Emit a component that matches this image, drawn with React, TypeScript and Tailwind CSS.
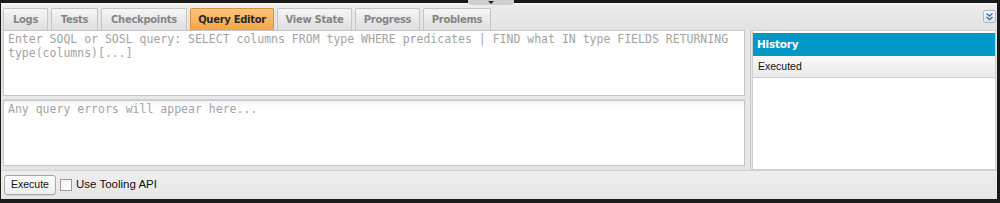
import { useState } from "react";

const tabs = [
  { label: "Logs", width: "w-[45px]" },
  { label: "Tests", width: "w-[47px]" },
  { label: "Checkpoints", width: "w-[86px]" },
  { label: "Query Editor", width: "w-[84px]" },
  { label: "View State", width: "w-[75px]" },
  { label: "Progress", width: "w-[65px]" },
  { label: "Problems", width: "w-[68px]" },
];

const mono = "font-['DejaVu_Sans_Mono',monospace]";

function Tab({ label, width, active, onClick }: { label: string; width: string; active: boolean; onClick: () => void }) {
  return (
    <button
      type="button"
      onClick={onClick}
      className={`${width} mr-[3px] flex h-[22px] items-center justify-center rounded-t-[2px] border border-b-0 text-[10px] font-bold tracking-[-0.3px] ${
        active
          ? "border-[#d9923f] bg-gradient-to-b from-[#fcc47a] to-[#f6a444] text-[#2a2a2a]"
          : "border-[#c4c4c4] bg-gradient-to-b from-[#f6f6f6] to-[#dedede] text-[#858585]"
      }`}
    >
      {label}
    </button>
  );
}

export default function App() {
  const [activeTab, setActiveTab] = useState("Query Editor");
  const [tooling, setTooling] = useState(false);

  return (
    <div className="relative h-[203px] w-[1000px] overflow-hidden bg-[#1a1a1a] pl-[1px] pr-[3px] pt-[3px] pb-[4px] font-['DejaVu_Sans',sans-serif]">
      {/* little drawer handle on the top edge */}
      <div className="absolute left-[468px] top-0 flex h-[5px] w-[46px] justify-center rounded-b-[3px] bg-[#cfcfcf]">
        <div className="mt-[1px] h-0 w-0 border-x-[3px] border-t-[3px] border-x-transparent border-t-[#222]" />
      </div>

      <div className="flex h-full flex-col bg-[#e4e4e4]">
        {/* tab bar */}
        <div className="flex h-[27px] items-end border-t-2 border-[#f4f4f4] bg-gradient-to-b from-[#ececec] to-[#e2e2e2] pl-[2px] pr-[1px]">
          {tabs.map((t) => (
            <Tab key={t.label} label={t.label} width={t.width} active={activeTab === t.label} onClick={() => setActiveTab(t.label)} />
          ))}
          <button
            type="button"
            className="mb-[7px] ml-auto flex h-[13px] w-[13px] items-center justify-center rounded-[2px] border border-[#a9bccb] bg-gradient-to-b from-[#f4f8fb] to-[#dde6ee]"
          >
            <svg width="9" height="9" viewBox="0 0 9 9" fill="none" stroke="#3a6fa0" strokeWidth="1.4">
              <path d="M1.5 1.5 L4.5 4 L7.5 1.5" />
              <path d="M1.5 5 L4.5 7.5 L7.5 5" />
            </svg>
          </button>
        </div>

        {/* editor + history */}
        <div className="flex h-[140px] pl-[2px] pr-[1px]">
          <div className="flex w-[742px] flex-col">
            <textarea
              readOnly
              className={`h-[66px] w-full resize-none border border-[#c6c6c6] bg-white px-[4px] pt-[1px] text-[11.5px] leading-[14px] ${mono} placeholder:text-[#a3a3a3] outline-none`}
              placeholder="Enter SOQL or SOSL query: SELECT columns FROM type WHERE predicates | FIND what IN type FIELDS RETURNING type(columns)[...]"
            />
            <div className="h-[4px] border-b border-[#d4d4d4] bg-[#e8e8e8]" />
            <textarea
              readOnly
              className={`h-[66px] w-full resize-none border border-[#c6c6c6] bg-gradient-to-b from-[#f3f5f8] to-white to-[6px] px-[4px] pt-[1px] text-[11.5px] leading-[14px] ${mono} placeholder:text-[#a3a3a3] outline-none`}
              placeholder="Any query errors will appear here..."
            />
          </div>

          {/* splitter */}
          <div className="mx-[1px] w-[5px] border-r border-[#c8c8c8] bg-[#e6e6e6]" />

          <div className="flex flex-1 flex-col border border-[#cfcfcf] bg-white pt-[2px]">
            <div className="flex h-[23px] items-center bg-[#0098c4] pl-[4px] text-[10.5px] font-bold tracking-[-0.2px] text-white">
              History
            </div>
            <div className="flex h-[22px] items-center border-b border-[#cfcfcf] bg-gradient-to-b from-[#f9f9f9] to-[#e9e9e9] pl-[5px] font-['Liberation_Sans',sans-serif] text-[10.5px] text-[#111]">
              Executed
            </div>
            <div className="flex-1 bg-white" />
          </div>
        </div>

        {/* bottom toolbar */}
        <div className="flex flex-1 items-center gap-[4px] border-t border-[#d2d2d2] bg-gradient-to-b from-[#eeeeee] to-[#e6e6e6] pl-[3px] font-['Liberation_Sans',sans-serif]">
          <button
            type="button"
            className="h-[20px] w-[52px] rounded-[3px] border border-[#a8a8a8] bg-gradient-to-b from-white to-[#ececec] text-[10.5px] text-[#111] shadow-[0_1px_0_rgba(0,0,0,0.08)]"
          >
            Execute
          </button>
          <label className="flex items-center gap-[4px] text-[11.5px] text-[#111]">
            <input
              type="checkbox"
              checked={tooling}
              onChange={(e) => setTooling(e.target.checked)}
              className="h-[12px] w-[12px] appearance-none border border-[#9a9a9a] bg-gradient-to-b from-[#f4f4f4] to-white checked:bg-[#4a90d9]"
            />
            Use Tooling API
          </label>
        </div>
      </div>
    </div>
  );
}
